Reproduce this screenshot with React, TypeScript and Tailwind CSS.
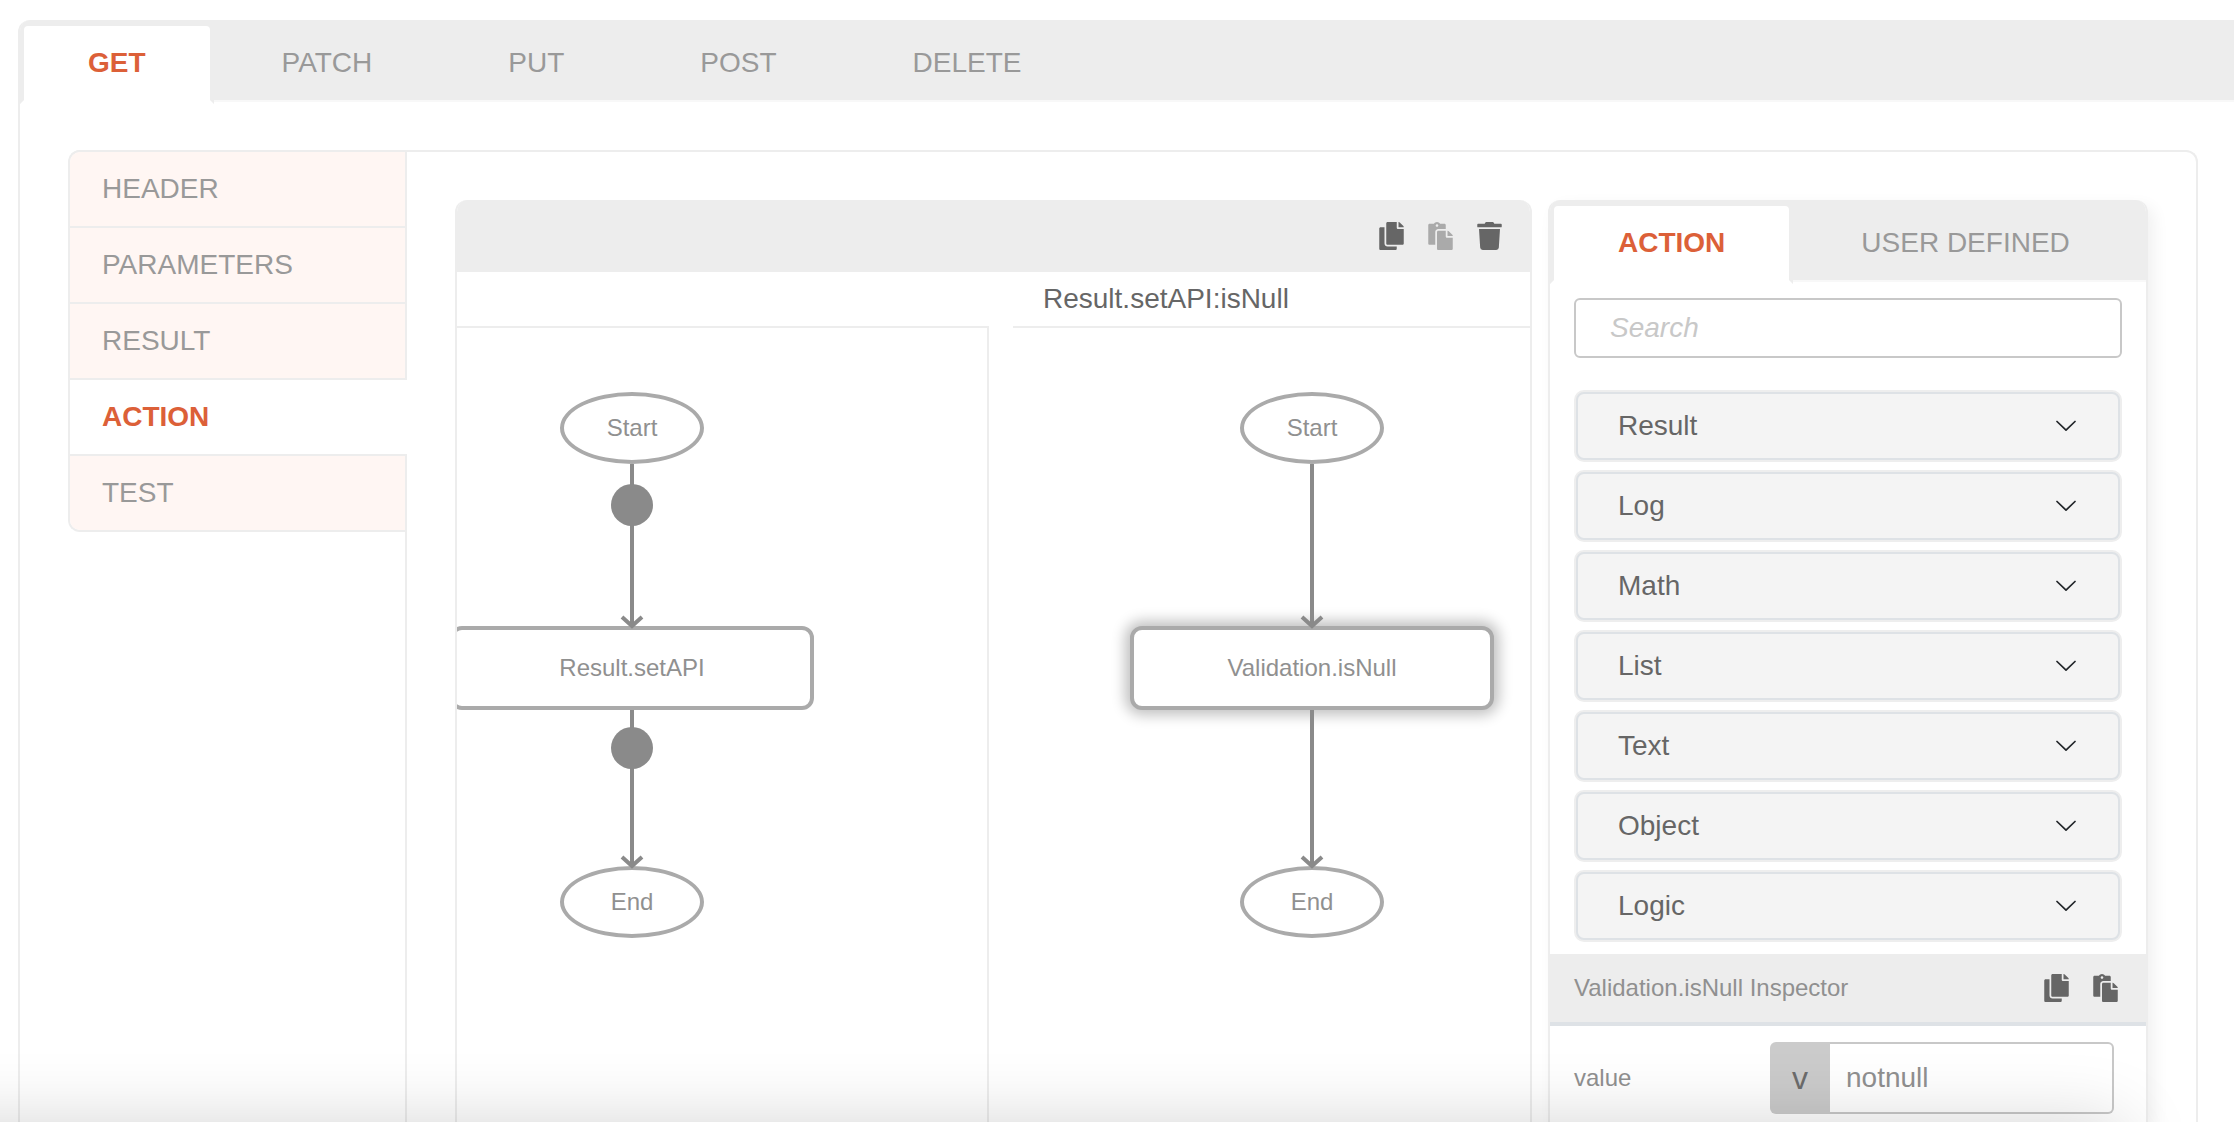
import { useState, type ReactNode } from 'react';
import { FaCopy, FaPaste, FaTrash } from 'react-icons/fa';

const METHODS = ['GET', 'PATCH', 'PUT', 'POST', 'DELETE'];
const SECTIONS = ['HEADER', 'PARAMETERS', 'RESULT', 'ACTION', 'TEST'];
const LIBRARY_TABS = ['ACTION', 'USER DEFINED'];
const GROUPS = ['Result', 'Log', 'Math', 'List', 'Text', 'Object', 'Logic'];

function Tabs({ items, label }: { items: string[]; label: string }) {
  const [active, setActive] = useState(items[0]);
  return (
    <div
      role="tablist"
      aria-label={label}
      className="flex h-[82px] shrink-0 items-start border-b-2 border-[#f8f8f8] bg-[#ededed]"
    >
      {items.map((item) => (
        <button
          key={item}
          role="tab"
          type="button"
          aria-selected={item === active}
          onClick={() => setActive(item)}
          className={
            item === active
              ? 'relative z-10 mt-0.5 h-[82px] rounded-t-lg border-4 border-[#ededed] border-b-white bg-white px-16 text-[28px] leading-9 font-bold text-[#dc6038]'
              : 'mt-0.5 h-[82px] border-4 border-transparent px-16 text-[28px] leading-9 text-[#999]'
          }
        >
          {item}
        </button>
      ))}
    </div>
  );
}

function IconButton({ label, children, disabled }: { label: string; children: ReactNode; disabled?: boolean }) {
  return (
    <button
      type="button"
      aria-label={label}
      disabled={disabled}
      className="text-[28px] text-[#666] disabled:text-[#aaa] [&>svg]:h-7 [&>svg]:w-[25px]"
    >
      {children}
    </button>
  );
}

function Edge({ height, dot }: { height: number; dot?: number }) {
  return (
    <svg width="44" height={height + 4} className="relative -mb-1 overflow-visible" aria-hidden="true">
      <path d={`M22 0V${height}`} stroke="#8a8a8a" strokeWidth="4" />
      <path d={`M12 ${height - 9}L22 ${height}L32 ${height - 9}`} fill="none" stroke="#8a8a8a" strokeWidth="4" />
      {dot && <circle cx="22" cy={dot} r="21" fill="#8a8a8a" />}
    </svg>
  );
}

function Terminal({ name }: { name: string }) {
  return (
    <div className="flex h-[72px] w-36 shrink-0 items-center justify-center rounded-[50%] border-4 border-[#aaa] text-2xl">
      {name}
    </div>
  );
}

function Flow({ name, selected, dots }: { name: string; selected?: boolean; dots?: boolean }) {
  return (
    <div className="flex w-[364px] flex-col items-center text-[#909090]">
      <Terminal name="Start" />
      <Edge height={162} dot={dots ? 41 : undefined} />
      <div
        className={
          selected
            ? 'flex h-[84px] w-full shrink-0 items-center justify-center rounded-xl border-4 border-[#aaa] bg-white text-2xl shadow-[0_0_14px_5px_#c0c0c0]'
            : 'flex h-[84px] w-full shrink-0 items-center justify-center rounded-xl border-4 border-[#aaa] bg-white text-2xl'
        }
      >
        {name}
      </div>
      <Edge height={156} dot={dots ? 38 : undefined} />
      <Terminal name="End" />
    </div>
  );
}

export default function App() {
  const [value, setValue] = useState('notnull');
  return (
    <div className="h-screen overflow-hidden bg-white pt-5 pl-[18px] font-['Liberation_Sans',Arial,sans-serif]">
      <main className="-mr-3.5 flex h-full flex-col overflow-hidden rounded-t-xl border-x-2 border-[#ededed]">
        <Tabs items={METHODS} label="HTTP method" />
        <div className="flex min-h-0 flex-1 px-12 pt-12">
          <section className="flex w-full rounded-t-xl border-2 border-b-0 border-[#ededed] border-l-transparent">
            <nav aria-label="Sections" className="-mt-0.5 -ml-0.5 flex w-[339px] shrink-0 flex-col">
              <ul className="overflow-hidden rounded-l-xl border-2 border-r-0 border-[#ededed]">
                {SECTIONS.map((s) => (
                  <li key={s} className="border-b-2 border-[#ededed] last:border-b-0">
                    <a
                      href={`#${s.toLowerCase()}`}
                      aria-current={s === 'ACTION' ? 'page' : undefined}
                      className={
                        s === 'ACTION'
                          ? 'flex h-[74px] items-center px-8 text-[28px] font-bold text-[#dc6038]'
                          : 'flex h-[74px] items-center border-r-2 border-[#ededed] bg-[#fff6f3] px-8 text-[28px] text-[#999]'
                      }
                    >
                      {s}
                    </a>
                  </li>
                ))}
              </ul>
              <div className="flex-1 border-r-2 border-[#ededed]" />
            </nav>

            <div className="flex min-w-0 flex-1 gap-4 pt-12 pr-12 pl-12">
              <section aria-label="Flow editor" className="flex min-w-0 flex-1 flex-col overflow-hidden rounded-t-xl border-x-2 border-[#ededed]">
                <header className="flex h-[72px] shrink-0 items-center justify-end gap-6 bg-[#ededed] pr-7">
                  <IconButton label="Copy"><FaCopy /></IconButton>
                  <IconButton label="Paste" disabled><FaPaste /></IconButton>
                  <IconButton label="Delete"><FaTrash /></IconButton>
                </header>
                <div className="flex min-h-0 flex-1 gap-6">
                  <div className="flex w-[532px] shrink-0 flex-col">
                    <div className="h-14 border-b-2 border-[#ededed]" />
                    <div className="relative flex-1 overflow-hidden border-r-2 border-[#ededed]">
                      <div className="absolute top-16 -left-[7px]">
                        <Flow name="Result.setAPI" dots />
                      </div>
                    </div>
                  </div>
                  <div className="flex min-w-0 flex-1 flex-col">
                    <h2 className="flex h-14 items-center border-b-2 border-[#ededed] pl-[30px] text-[28px] text-[#666]">
                      Result.setAPI:isNull
                    </h2>
                    <div className="relative flex-1 overflow-hidden">
                      <div className="absolute top-16 left-[117px]">
                        <Flow name="Validation.isNull" selected />
                      </div>
                    </div>
                  </div>
                </div>
              </section>

              <aside className="w-[600px] shrink-0 rounded-t-xl shadow-[6px_6px_16px_rgba(0,0,0,0.06)]">
                <div className="flex h-full flex-col overflow-hidden rounded-t-xl border-x-2 border-[#ededed]">
                  <Tabs items={LIBRARY_TABS} label="Library" />
                  <div className="px-6 pt-4 pb-3">
                    <input
                      type="search"
                      aria-label="Search"
                      placeholder="Search"
                      className="h-[60px] w-full rounded-md border-2 border-[#c8c8c8] bg-white px-[34px] text-[28px] text-[#666] outline-none placeholder:text-[#c8c8c8] placeholder:italic"
                    />
                    <div className="mt-8 flex flex-col gap-2">
                      {GROUPS.map((g) => (
                        <button
                          key={g}
                          type="button"
                          aria-expanded="false"
                          className="rounded-[10px] border-2 border-[#eee] bg-[#eee] text-left"
                        >
                          <span className="flex h-[68px] items-center justify-between rounded-lg border-2 border-[#dee2e6] bg-[#f4f4f4] pr-[42px] pl-10 text-[28px] text-[#666]">
                            {g}
                            <svg width="20" height="12" viewBox="0 0 20 12" aria-hidden="true">
                              <path d="M1 1.5L10 10.2L19 1.5" fill="none" stroke="#212529" strokeWidth="1.7" strokeLinecap="round" strokeLinejoin="round" />
                            </svg>
                          </span>
                        </button>
                      ))}
                    </div>
                  </div>
                  <header className="flex h-[72px] shrink-0 items-center border-b-4 border-[#dee2e6] bg-[#ededed] pr-7 pl-6">
                    <h2 className="flex-1 text-2xl text-[#909090]">Validation.isNull Inspector</h2>
                    <div className="flex gap-6">
                      <IconButton label="Copy parameters"><FaCopy /></IconButton>
                      <IconButton label="Paste parameters"><FaPaste /></IconButton>
                    </div>
                  </header>
                  <div className="flex items-center pt-4 pr-8 pl-6">
                    <label htmlFor="value" className="w-[196px] text-2xl text-[#909090]">value</label>
                    <button type="button" aria-label="Value type" className="h-[72px] w-[60px] rounded-l-md bg-[#cbcbcb] text-[32px] text-[#6c6c6c]">
                      v
                    </button>
                    <input
                      id="value"
                      value={value}
                      onChange={(e) => setValue(e.target.value)}
                      className="h-[72px] min-w-0 flex-1 rounded-r-md border-2 border-l-0 border-[#c8c8c8] bg-white px-4 text-[28px] text-[#909090] outline-none"
                    />
                  </div>
                </div>
              </aside>
            </div>
          </section>
        </div>
      </main>
      <div className="pointer-events-none fixed right-28 -bottom-40 -left-24 h-40 shadow-[0_0_70px_rgba(0,0,0,0.17)]" />
    </div>
  );
}
